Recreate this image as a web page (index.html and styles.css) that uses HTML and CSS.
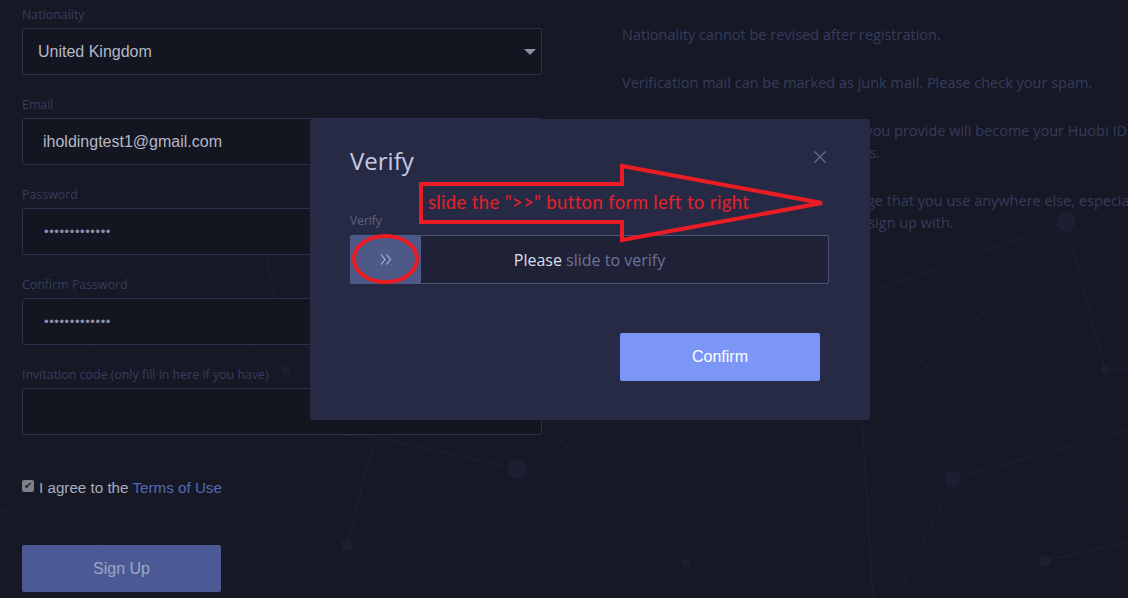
FILE: index.html
```html
<!DOCTYPE html>
<html lang="en">
<head>
<meta charset="utf-8">
<title>Sign Up</title>
<link rel="stylesheet" href="styles.css">
</head>
<body>
<svg class="network" width="1128" height="598" viewBox="0 0 1128 598" aria-hidden="true">
  <g class="net-lines">
    <line x1="1066" y1="222" x2="868" y2="293"/>
    <line x1="1066" y1="222" x2="930" y2="370"/>
    <line x1="1066" y1="222" x2="1105" y2="370"/>
    <line x1="1066" y1="222" x2="1128" y2="262"/>
    <line x1="1105" y1="370" x2="1128" y2="370"/>
    <line x1="930" y1="370" x2="868" y2="313"/>
    <line x1="953" y1="479" x2="1128" y2="430"/>
    <line x1="953" y1="479" x2="860" y2="380"/>
    <line x1="953" y1="479" x2="897" y2="598"/>
    <line x1="862" y1="420" x2="873" y2="598"/>
    <line x1="1045" y1="561" x2="1128" y2="505"/>
    <line x1="1045" y1="561" x2="1128" y2="542"/>
    <line x1="686" y1="563" x2="560" y2="440"/>
    <line x1="686" y1="563" x2="780" y2="420"/>
    <line x1="347" y1="545" x2="375" y2="437"/>
    <line x1="347" y1="545" x2="300" y2="598"/>
    <line x1="375" y1="437" x2="517" y2="469"/>
    <line x1="310" y1="433" x2="375" y2="437"/>
    <line x1="517" y1="469" x2="560" y2="437"/>
    <line x1="0" y1="510" x2="107" y2="547"/>
    <line x1="0" y1="297" x2="67" y2="269"/>
    <line x1="67" y1="269" x2="100" y2="360"/>
    <line x1="267" y1="257" x2="275" y2="300"/>
    <line x1="286" y1="370" x2="200" y2="300"/>
  </g>
  <g class="net-nodes">
    <circle cx="517" cy="469" r="10"/>
    <circle cx="953" cy="479" r="8"/>
    <circle cx="1066" cy="222" r="10"/>
    <circle cx="1105" cy="370" r="4"/>
    <circle cx="1045" cy="561" r="6"/>
    <circle cx="686" cy="563" r="4"/>
    <circle cx="347" cy="545" r="6"/>
    <circle cx="286" cy="370" r="4"/>
  </g>
</svg>

<div class="page">
  <form class="form">
    <div class="fields">
      <div class="field">
        <label class="label">Nationality</label>
        <div class="input select">United Kingdom<span class="caret"></span></div>
      </div>
      <div class="field">
        <label class="label">Email</label>
        <div class="input">iholdingtest1@gmail.com</div>
      </div>
      <div class="field">
        <label class="label">Password</label>
        <div class="input dots">•••••••••••••</div>
      </div>
      <div class="field">
        <label class="label">Confirm Password</label>
        <div class="input dots">•••••••••••••</div>
      </div>
      <div class="field">
        <label class="label">Invitation code (only fill in here if you have)</label>
        <div class="input"></div>
      </div>
    </div>
    <div class="agree"><span class="checkbox">✔</span><span>I agree to the <a class="link">Terms of Use</a></span></div>
    <button type="button" class="signup">Sign Up</button>
  </form>

  <div class="tips">
    <p>Nationality cannot be revised after registration.</p>
    <p>Verification mail can be marked as junk mail. Please check your spam.</p>
    <p>The mobile phone number or email you provide will become your Huobi ID for login<br>and the account of all Huobi products.</p>
    <p>Do not use a password of an exchange that you use anywhere else, especially<br>ly the one for the email account you sign up with.</p>
  </div>
</div>

<div class="modal">
  <h2 class="modal-title">Verify</h2>
  <span class="close">
    <svg width="12" height="12" viewBox="0 0 12 12"><path d="M0.5 0.5 L11.5 11.5 M11.5 0.5 L0.5 11.5"/></svg>
  </span>
  <div class="modal-label">Verify</div>
  <div class="slider">
    <div class="handle">
      <svg width="12" height="11" viewBox="0 0 12 11"><path d="M1 0.5 L5 5.5 L1 10.5 M6.5 0.5 L10.5 5.5 L6.5 10.5"/></svg>
    </div>
    <div class="slider-text"><span class="strong">Please</span>&nbsp;slide to verify</div>
  </div>
  <div class="modal-foot">
    <button type="button" class="confirm">Confirm</button>
  </div>
</div>

<div class="annotation">
  <svg width="1128" height="598" viewBox="0 0 1128 598" aria-hidden="true">
    <polygon points="421,184 622,184 622,166 822,203 622,240 622,222 421,222"/>
    <ellipse cx="385.5" cy="259" rx="31.5" ry="23"/>
  </svg>
  <span class="note">slide the "&gt;&gt;" button form left to right</span>
</div>
</body>
</html>
```

FILE: styles.css
```css
* { box-sizing: border-box; }

html, body {
  margin: 0;
  padding: 0;
}

body {
  position: relative;
  width: 1128px;
  height: 598px;
  overflow: hidden;
  background: #161826;
  font-family: "Open Sans", "Noto Sans", sans-serif;
}

/* decorative network background */
.network {
  position: absolute;
  left: 0;
  top: 0;
}
.net-lines line {
  stroke: #1e2134;
  stroke-width: 1;
}
.net-nodes circle {
  fill: #1c1f31;
}

.page {
  position: relative;
  display: flex;
  gap: 80px;
  padding: 6px 0 0 22px;
}

.form {
  width: 520px;
  flex: none;
  margin: 0;
}

.fields {
  display: flex;
  flex-direction: column;
  gap: 21px;
}

.label {
  display: block;
  font-size: 12.4px;
  line-height: 18px;
  color: #373d5c;
  margin-bottom: 4px;
}

.input {
  height: 47px;
  border: 1px solid #2a3050;
  border-radius: 3px;
  background: #131520;
  display: flex;
  align-items: center;
  padding-left: 20px;
  font-family: "Liberation Sans", Arial, sans-serif;
  font-size: 16px;
  color: #b5b8c8;
}

.select {
  padding-left: 15px;
  padding-right: 5px;
  justify-content: space-between;
}

.caret {
  width: 0;
  height: 0;
  border-left: 6px solid transparent;
  border-right: 6px solid transparent;
  border-top: 6px solid #8a8ea3;
}

.dots {
  font-size: 13px;
  letter-spacing: 0.6px;
  color: #8b90a8;
  padding-left: 21px;
}

.agree {
  display: flex;
  align-items: center;
  gap: 5px;
  height: 24px;
  margin-top: 40px;
  font-family: "Liberation Sans", Arial, sans-serif;
  font-size: 15.2px;
  color: #a8acbf;
}

.checkbox {
  width: 12px;
  height: 12px;
  border-radius: 2px;
  background: #7f818a;
  color: #262629;
  font-size: 10px;
  line-height: 12px;
  text-align: center;
  margin-top: -3px;
}

.link {
  color: #5668b4;
}

.signup {
  display: block;
  width: 199px;
  height: 47px;
  margin-top: 46px;
  border: none;
  border-radius: 2px;
  background: #4b5a94;
  color: #9ea6c4;
  font-family: "Liberation Sans", Arial, sans-serif;
  font-size: 16px;
}

.tips {
  flex: none;
  width: 620px;
  margin-top: 18px;
  font-size: 14.5px;
  line-height: 22px;
  color: #363c5a;
  white-space: nowrap;
}
.tips p {
  margin: 0 0 26px;
}

/* modal */
.modal {
  position: absolute;
  left: 310px;
  top: 119px;
  width: 560px;
  height: 301px;
  background: #272a44;
  border-radius: 3px;
  padding: 26px 50px 0 40px;
}

.modal-title {
  margin: 0;
  font-size: 24px;
  font-weight: 400;
  line-height: 32px;
  color: #c6cbe4;
}

.close {
  position: absolute;
  right: 44px;
  top: 32px;
  width: 12px;
  height: 12px;
  display: block;
}
.close svg {
  display: block;
}
.close path {
  stroke: #6a7093;
  stroke-width: 1.2;
  fill: none;
}

.modal-label {
  margin-top: 35px;
  font-size: 12px;
  line-height: 18px;
  color: #5d6385;
}

.slider {
  position: relative;
  margin-top: 5px;
  width: 479px;
  height: 49px;
  border: 1px solid #4a5376;
  border-radius: 2px;
  background: #1f2236;
  display: flex;
  align-items: center;
  justify-content: center;
}

.handle {
  position: absolute;
  left: -1px;
  top: -1px;
  width: 71px;
  height: 49px;
  background: #4d5987;
  border-radius: 2px 0 0 2px;
  display: flex;
  align-items: center;
  justify-content: center;
}
.handle svg {
  display: block;
}
.handle path {
  stroke: #b6bddb;
  stroke-width: 1.1;
  fill: none;
}

.slider-text {
  font-size: 16px;
  color: #6b7295;
}
.slider-text .strong {
  color: #dcdfea;
}

.modal-foot {
  display: flex;
  justify-content: flex-end;
  margin-top: 49px;
}

.confirm {
  width: 200px;
  height: 48px;
  border: none;
  border-radius: 2px;
  background: #7b96f6;
  color: #ffffff;
  font-family: "Liberation Sans", Arial, sans-serif;
  font-size: 16px;
}

/* red annotation drawn over the screenshot */
.annotation {
  position: absolute;
  left: 0;
  top: 0;
  width: 1128px;
  height: 598px;
  pointer-events: none;
}
.annotation svg {
  position: absolute;
  left: 0;
  top: 0;
}
.annotation polygon,
.annotation ellipse {
  fill: none;
  stroke: #ec1c24;
  stroke-width: 4;
}

.note {
  position: absolute;
  left: 428px;
  top: 191px;
  font-family: Lato, "Open Sans", sans-serif;
  font-size: 18.5px;
  letter-spacing: 0.35px;
  line-height: 22px;
  color: #e8202a;
  white-space: nowrap;
}
```
